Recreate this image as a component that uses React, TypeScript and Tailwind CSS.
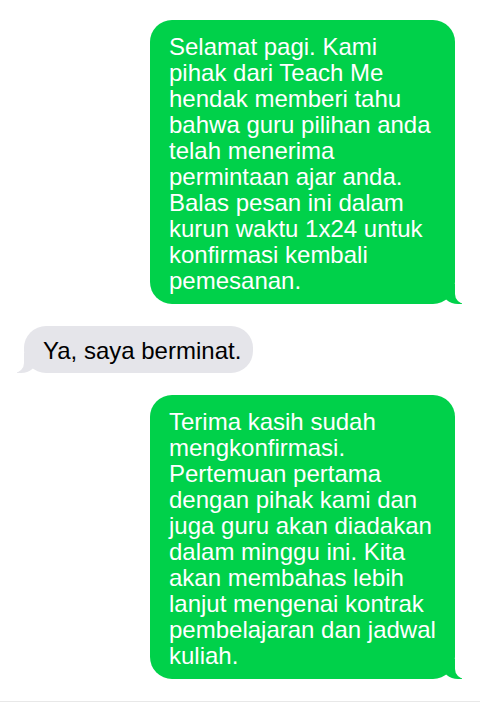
import React from 'react';

type Msg = { from: 'me' | 'them'; text: string };

const messages: Msg[] = [
  {
    from: 'me',
    text: 'Selamat pagi. Kami pihak dari Teach Me hendak memberi tahu bahwa guru pilihan anda telah menerima permintaan ajar anda. Balas pesan ini dalam kurun waktu 1x24 untuk konfirmasi kembali pemesanan.',
  },
  { from: 'them', text: 'Ya, saya berminat.' },
  {
    from: 'me',
    text: 'Terima kasih sudah mengkonfirmasi. Pertemuan pertama dengan pihak kami dan juga guru akan diadakan dalam minggu ini. Kita akan membahas lebih lanjut mengenai kontrak pembelajaran dan jadwal kuliah.',
  },
];

const Bubble: React.FC<{ msg: Msg }> = ({ msg }) => {
  if (msg.from === 'me') {
    return (
      <div className="relative self-end mr-[25px] w-[305px] rounded-[22px] bg-[#00d14a] pl-[19px] pr-[18px] pt-[14px] pb-[10px] text-white">
        <p className="relative z-10">{msg.text}</p>
        <span className="absolute bottom-0 right-[-7px] h-[20px] border-r-[20px] border-[#00d14a] rounded-bl-[16px_14px]" />
        <span className="absolute bottom-0 right-[-26px] h-[20px] w-[26px] bg-white rounded-bl-[10px]" />
      </div>
    );
  }
  return (
    <div className="relative self-start ml-[24px] rounded-[22px] bg-[#e5e5ea] pl-[19px] pr-[12px] pt-[12px] pb-[9px] text-black">
      <p className="relative z-10">{msg.text}</p>
      <span className="absolute bottom-0 left-[-7px] h-[20px] border-l-[20px] border-[#e5e5ea] rounded-br-[16px_14px]" />
      <span className="absolute bottom-0 left-[-26px] h-[20px] w-[26px] bg-white rounded-br-[10px]" />
    </div>
  );
};

export default function App() {
  return (
    <div className="min-h-screen bg-white">
      <div
        className="flex flex-col gap-[22px] pt-[20px] pb-[22px] border-b border-[#e8e8e8] text-[24px] leading-[26px]"
        style={{ fontFamily: '"Liberation Sans", Arial, sans-serif' }}
      >
        {messages.map((m, i) => (
          <Bubble key={i} msg={m} />
        ))}
      </div>
    </div>
  );
}
